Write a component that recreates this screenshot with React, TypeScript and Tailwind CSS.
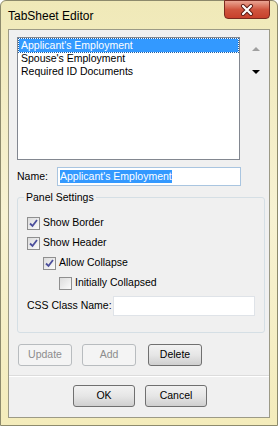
import React from "react";

const font = { fontFamily: '"Liberation Sans", Arial, sans-serif' };

function Check({ checked }: { checked: boolean }) {
  return (
    <span className="w-[13px] h-[13px] border border-[#8f8f8f] bg-linear-to-br from-[#dcdcdc] to-[#fbfbfb] flex items-center justify-center shrink-0">
      {checked && (
        <svg width="9" height="9" viewBox="0 0 9 9">
          <path d="M1 4.5 L3.5 7 L8 1" fill="none" stroke="#4c4f9c" strokeWidth="1.8" />
        </svg>
      )}
    </span>
  );
}

function Btn({ label, disabled, wide, className }: { label: string; disabled?: boolean; wide?: boolean; className?: string }) {
  return (
    <div
      className={
        "h-[22px] rounded-[3px] border flex items-center justify-center " +
        (wide ? "w-[62px] " : "w-[54px] ") +
        (disabled
          ? "border-[#b8bcbf] bg-[#f4f4f4] text-[#8d8d8d] "
          : "border-[#707070] bg-linear-to-b from-[#f2f2f2] via-[#e6e6e6] to-[#cfcfcf] text-black ") +
        (className ?? "")
      }
    >
      {label}
    </div>
  );
}

export default function App() {
  return (
    <div style={font} className="w-[278px] h-[426px] bg-linear-to-b from-[#f0e9b8] via-[#f7f2d2] to-[#f4ecbb] border border-[#8d8a6c] rounded-t-[6px] flex flex-col px-[7px] pb-[7px]">
      {/* Title bar */}
      <div className="h-[28px] flex items-start justify-between shrink-0">
        <span className="text-[12px] text-black mt-[6px]">TabSheet Editor</span>
        <div className="w-[46px] h-[19px] -mt-px rounded-b-[4px] border border-[#7a2a20] bg-linear-to-b from-[#e9a493] via-[#d0553f] to-[#c8412c] flex items-center justify-center">
          <svg width="14" height="12" viewBox="0 0 14 12">
            <path d="M3 2 L11 10 M11 2 L3 10" stroke="#5a1a12" strokeWidth="4" strokeLinecap="round" />
            <path d="M3 2 L11 10 M11 2 L3 10" stroke="#ffffff" strokeWidth="2.2" strokeLinecap="round" />
          </svg>
        </div>
      </div>

      {/* Client area */}
      <div className="flex-1 bg-[#f0f0f0] border border-[#9c9a86] text-[10.5px] text-black whitespace-nowrap px-[8px] pt-[7px] flex flex-col">
        <div className="flex">
          <div className="w-[224px] h-[123px] border border-[#828790] bg-white p-px">
            <div className="h-[13px] bg-[#3399ff] text-white leading-[13px] px-[2px] outline-1 outline-dotted outline-[#1a5fa8]">
              Applicant's Employment
            </div>
            <div className="h-[13px] leading-[13px] px-[2px]">Spouse's Employment</div>
            <div className="h-[13px] leading-[13px] px-[2px]">Required ID Documents</div>
          </div>
          <div className="flex flex-col items-center ml-[11px] w-[10px]">
            <svg className="mt-[10px]" width="8" height="4" viewBox="0 0 8 4">
              <path d="M0 4 L4 0 L8 4 Z" fill="#a0a0a0" />
            </svg>
            <svg className="mt-[19px]" width="8" height="4" viewBox="0 0 8 4">
              <path d="M0 0 L8 0 L4 4 Z" fill="#000000" />
            </svg>
          </div>
        </div>

        <div className="flex items-center mt-[7px] h-[19px]">
          <span className="w-[40px]">Name:</span>
          <div className="w-[184px] h-[19px] border border-[#a9c5e0] bg-white flex items-center px-[2px]">
            <span className="bg-[#3399ff] text-white leading-[13px]">Applicant's Employment</span>
          </div>
        </div>

        <div className="relative w-[248px] mt-[11px] border border-[#d5dfe5] rounded-[3px] px-[9px] pt-[15px] pb-[16px]">
          <span className="absolute -top-[8px] left-[6px] bg-[#f0f0f0] px-[2px] leading-[14px]">Panel Settings</span>
          <div className="h-5 flex items-center gap-[3px]">
            <Check checked />
            <span>Show Border</span>
          </div>
          <div className="h-5 flex items-center gap-[3px]">
            <Check checked />
            <span>Show Header</span>
          </div>
          <div className="h-5 flex items-center gap-[3px] pl-[16px]">
            <Check checked />
            <span>Allow Collapse</span>
          </div>
          <div className="h-5 flex items-center gap-[3px] pl-[32px]">
            <Check checked={false} />
            <span>Initially Collapsed</span>
          </div>
          <div className="h-5 mt-[3px] flex items-center">
            <span className="w-[87px]">CSS Class Name:</span>
            <div className="w-[143px] h-5 border border-[#dfe3e8] bg-white" />
          </div>
        </div>

        <div className="flex mt-[11px]">
          <Btn label="Update" disabled className="ml-px" />
          <Btn label="Add" disabled className="ml-[10px]" />
          <Btn label="Delete" className="ml-[12px]" />
        </div>

        <div className="mt-[9px] -mx-[8px] border-t border-[#dcdcdc] border-b border-b-white" />

        <div className="flex mt-[8px]">
          <Btn label="OK" wide className="ml-[56px]" />
          <Btn label="Cancel" wide className="ml-[10px]" />
        </div>
      </div>
    </div>
  );
}
